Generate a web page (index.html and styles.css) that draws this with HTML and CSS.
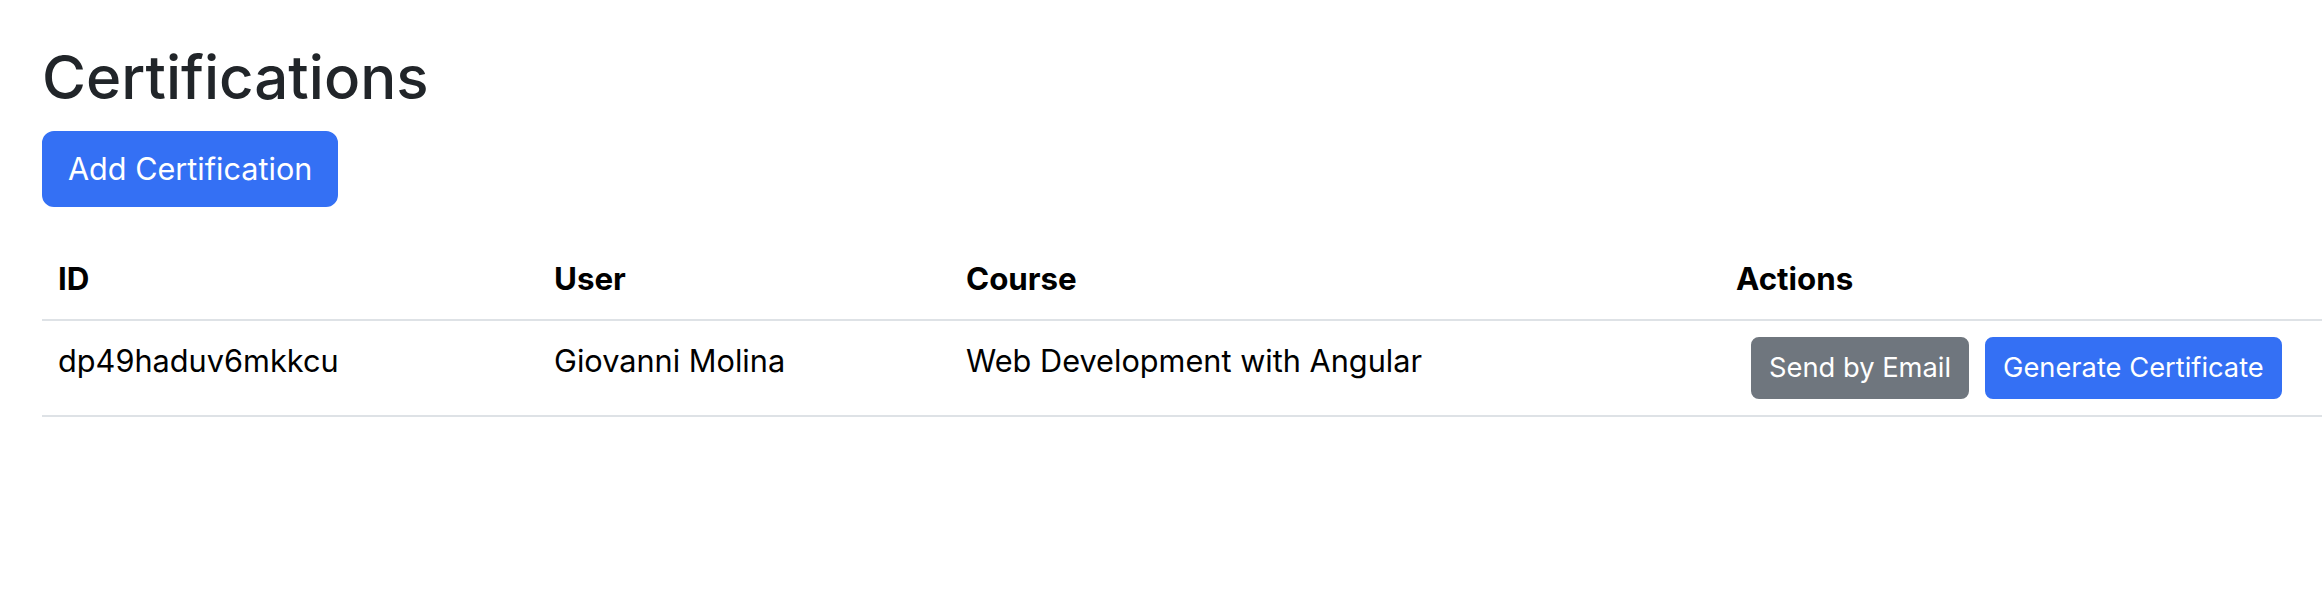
FILE: index.html
```html
<!DOCTYPE html>
<html lang="en">
<head>
<meta charset="utf-8">
<title>Certifications</title>
<link rel="stylesheet" href="styles.css">
</head>
<body>
<div class="page">
  <h1 class="title">Certifications</h1>
  <button class="btn btn-primary btn-add">Add Certification</button>
  <table class="table">
    <thead>
      <tr>
        <th class="col-id">ID</th>
        <th class="col-user">User</th>
        <th class="col-course">Course</th>
        <th class="col-actions">Actions</th>
      </tr>
    </thead>
    <tbody>
      <tr>
        <td>dp49haduv6mkkcu</td>
        <td>Giovanni Molina</td>
        <td>Web Development with Angular</td>
        <td>
          <div class="actions"><button class="btn btn-secondary btn-sm">Send by Email</button><button class="btn btn-primary btn-sm">Generate Certificate</button></div>
        </td>
      </tr>
    </tbody>
  </table>
</div>
</body>
</html>
```
FILE: styles.css
```css
html, body {
  margin: 0;
  background: #ffffff;
}

body {
  font-family: Inter, "Helvetica Neue", "Liberation Sans", Arial, sans-serif;
  color: #212529;
}

.page {
  padding: 39px 0 0 42px;
}

.title {
  margin: 0 0 16px;
  font-size: 60px;
  font-weight: 500;
  line-height: 76px;
  color: #212529;
}

.btn {
  display: inline-block;
  font-family: inherit;
  font-weight: 400;
  color: #ffffff;
  border: 2px solid transparent;
  cursor: pointer;
  white-space: nowrap;
}

.btn-primary {
  background: #3470f4;
  border-color: #3470f4;
}

.btn-secondary {
  background: #6f767e;
  border-color: #6f767e;
}

.btn-add {
  display: block;
  font-size: 30.6px;
  line-height: 48px;
  padding: 12px 24px;
  border-radius: 12px;
}

.btn-sm {
  font-size: 27.3px;
  line-height: 42px;
  padding: 8px 16px;
  border-radius: 8px;
}

.table {
  margin-top: 32px;
  width: 100%;
  border-collapse: collapse;
  table-layout: fixed;
}

.table th,
.table td {
  box-sizing: border-box;
  padding: 16px;
  text-align: left;
  vertical-align: top;
  font-size: 30.7px;
  line-height: 48px;
  color: #000000;
  border-bottom: 2px solid #dee2e6;
}

.table th {
  font-size: 31.3px;
  font-weight: 700;
}

.col-id { width: 496px; }
.col-user { width: 412px; }
.col-course { width: 770px; }

.actions {
  display: flex;
  gap: 16px;
  padding-left: 15px;
}
```
